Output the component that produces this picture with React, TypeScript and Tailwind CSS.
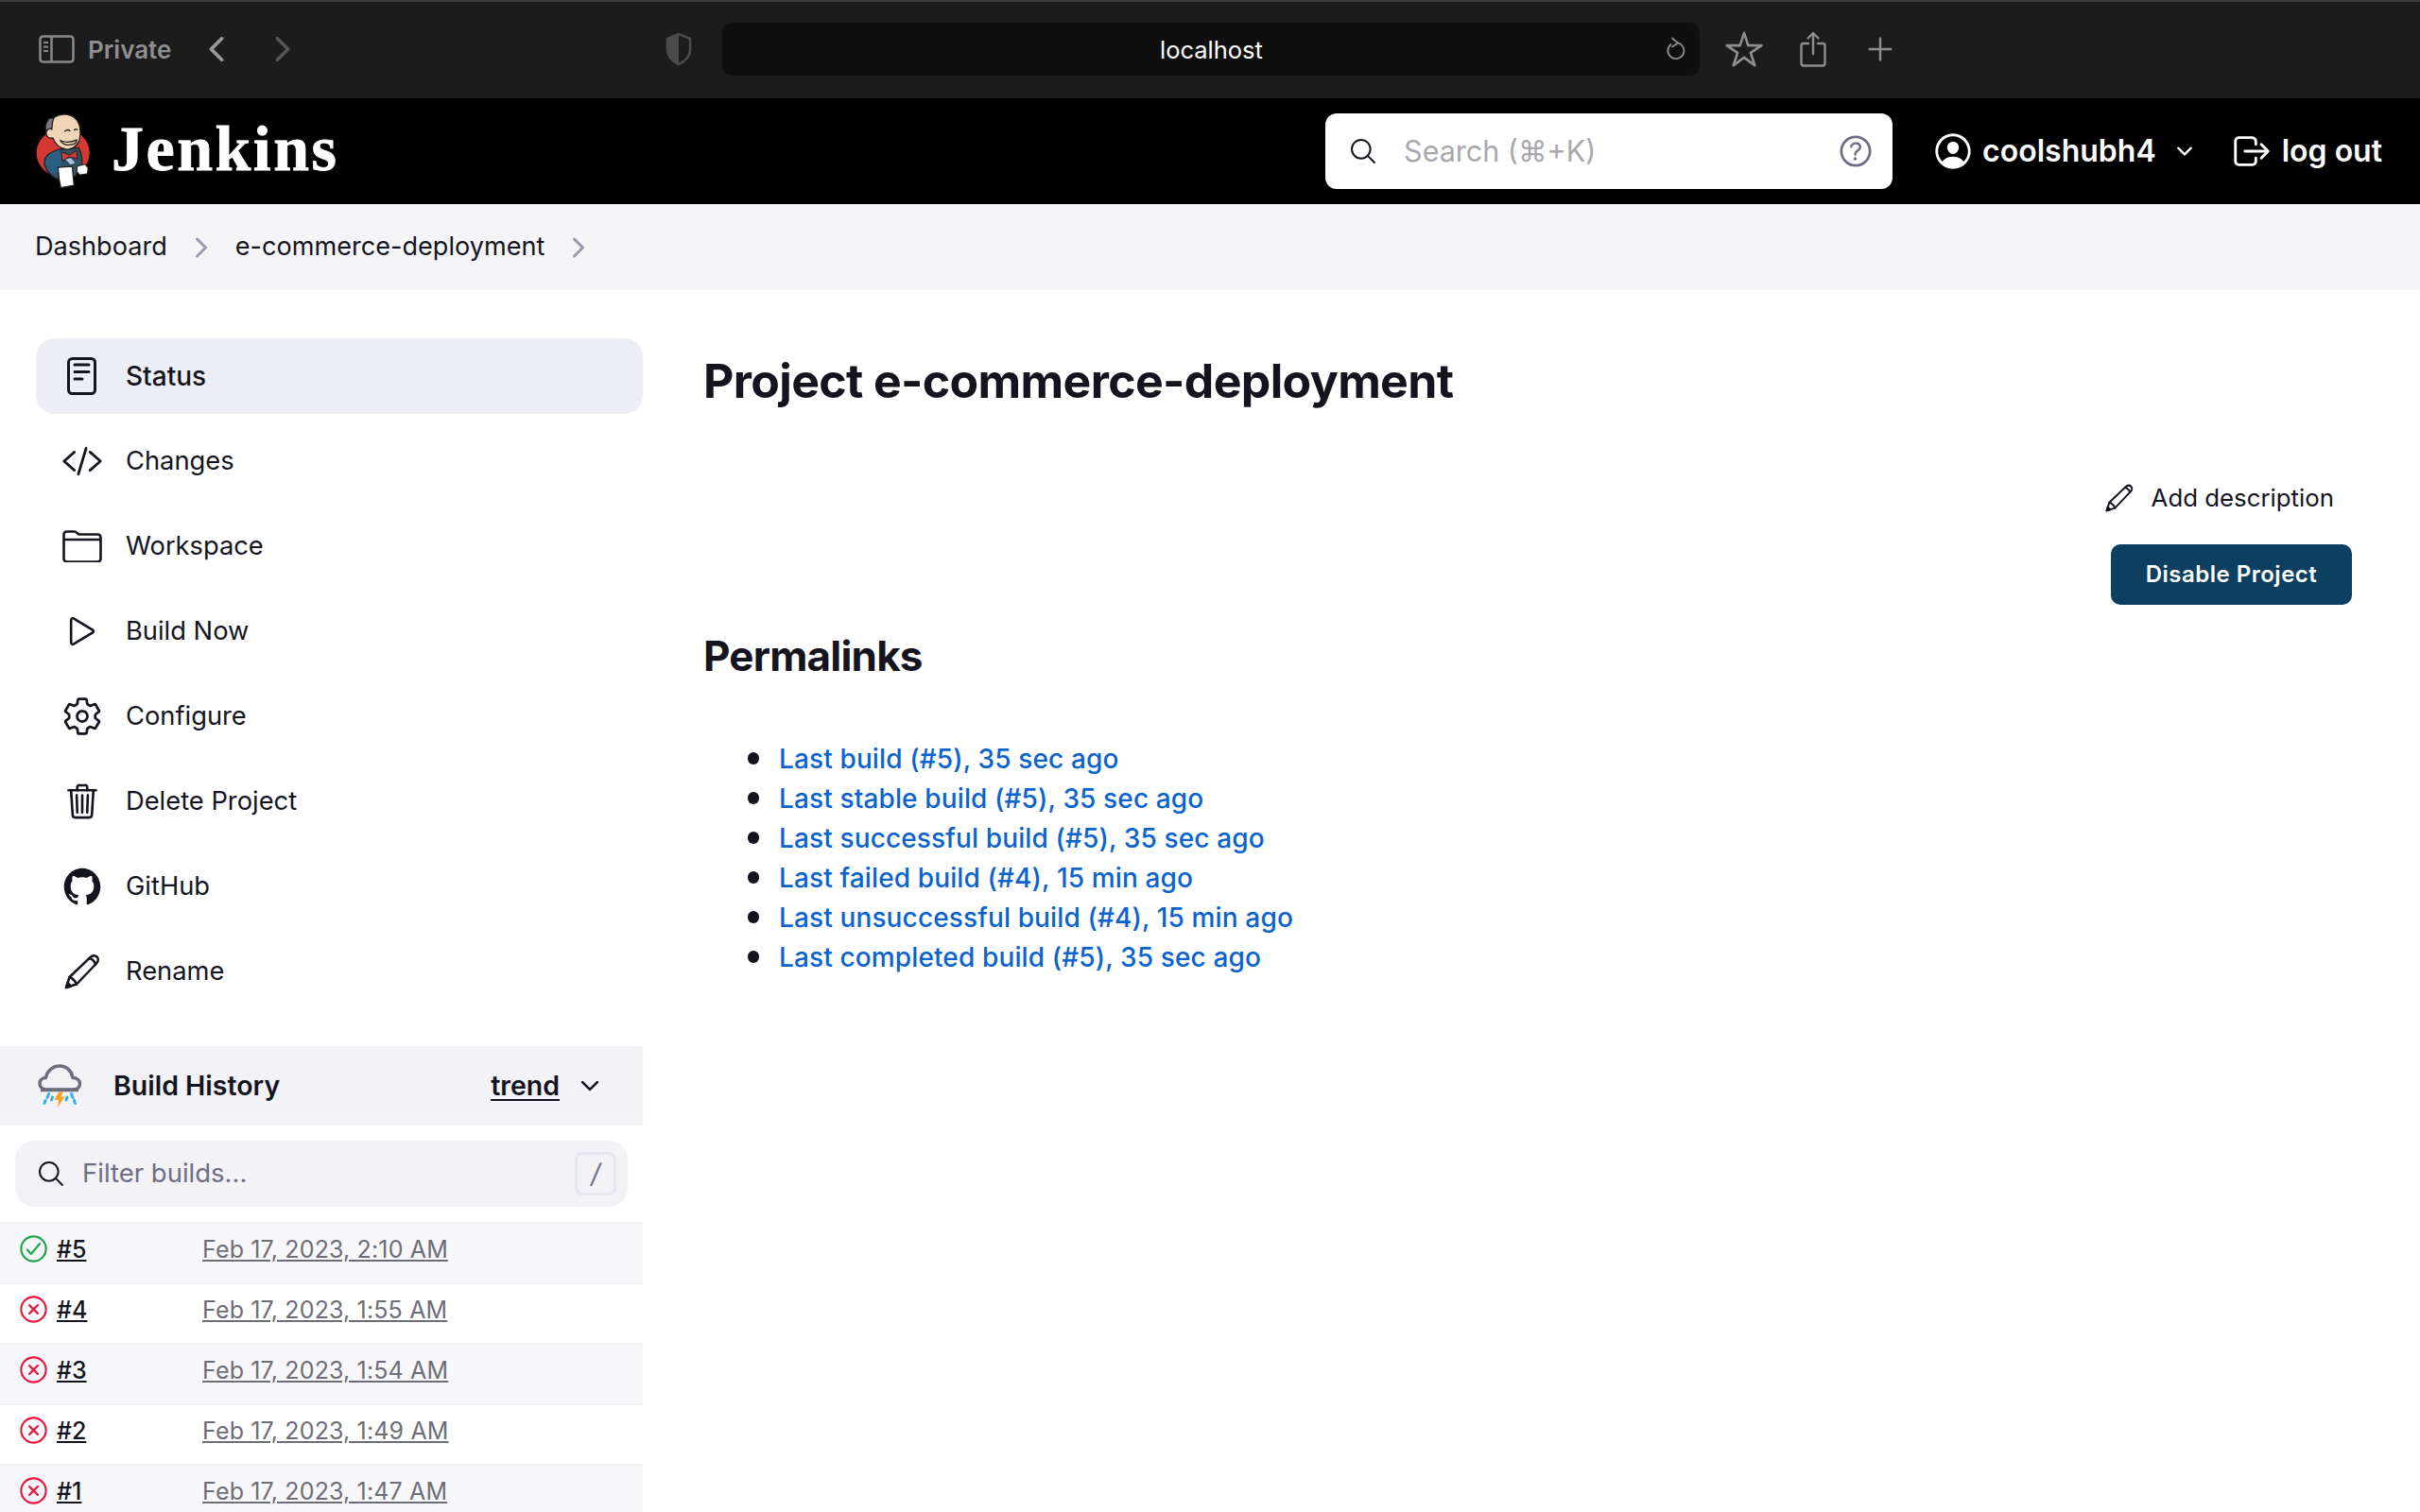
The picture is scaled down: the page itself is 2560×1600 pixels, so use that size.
import {
  IoAdd,
  IoChevronBack,
  IoChevronDownOutline,
  IoChevronForward,
  IoCheckmarkCircleOutline,
  IoCloseCircleOutline,
  IoCodeSlashOutline,
  IoHelpCircleOutline,
  IoLogoGithub,
  IoLogOutOutline,
  IoPersonCircleOutline,
  IoPlayOutline,
  IoSearchOutline,
  IoSettingsOutline,
  IoStarOutline,
  IoTrashOutline,
} from "react-icons/io5"
import type { ReactNode } from "react"

const StatusIcon = () => (
  <svg viewBox="0 0 31 40" className="w-[31px] h-[40px]" fill="none" stroke="currentColor" strokeLinecap="round">
    <rect x="1.500" y="1.500" width="28" height="37" rx="4" strokeWidth="3" />
    <path d="M8 8h15M8 15.500h15M8 23h8" strokeWidth="3" />
  </svg>
)

const FolderIcon = () => (
  <svg viewBox="0 0 42 34" className="w-[42px] h-[34px]" fill="none" stroke="currentColor" strokeWidth="2.600" strokeLinejoin="round">
    <path d="M1.500 9V5C1.500 2.800 2.800 1.500 5 1.500h8c2 0 3 3 5 3h19c2.200 0 3.500 1.200 3.500 3.500v22c0 2.200-1.300 3.500-3.500 3.500H5c-2.200 0-3.500-1.300-3.500-3.500z" />
    <path d="M1.500 10h39" />
  </svg>
)

const PencilIcon = ({ className }: { className: string }) => (
  <svg viewBox="0 0 38 38" className={className} fill="none" stroke="currentColor" strokeWidth="2.500" strokeLinecap="round" strokeLinejoin="round">
    <path d="M2 36l3.500-11L27 4.500c2.500-2.500 5.500-3 7.500-1s1.500 5-1 7.500L13 32.500z" />
    <path d="M26.500 5c3 .5 6 3.500 6.500 6.500M5.500 25c3 1 6.500 4.500 7.500 7.500" />
    <path d="M2 36l1.500-5 3.500 3.500z" fill="currentColor" />
  </svg>
)

const StormIcon = () => (
  <svg viewBox="0 0 46 46" className="w-[46px] h-[46px]" fill="none">
    <path d="M10 27c-4.500 0-8-2.500-8-6.500 0-3.500 3-6 6.500-6C9.500 8 15.500 2 23 2s13 5.500 14 12.500c4 0 7.500 2.500 7.500 6.500s-3.500 6-7.500 6z" fill="#f2f2f7" stroke="#6d6d80" strokeWidth="3.500" strokeLinejoin="round" />
    <path d="M3 27.500h40" stroke="#6d6d80" strokeWidth="3.500" />
    <path d="M22 29.500l-4.500 8.500h4.500l-1 8 7.500-11.500h-4l2.500-5z" fill="#f6a623" />
    <path d="M11.500 31.500l-1.500 4M8 38.500l-1 3M35.500 31.500l1.500 4M38.500 38.500l1 3M15.500 35l-1 3M31 35l-1 3" stroke="#35b0ea" strokeWidth="3" strokeLinecap="round" />
  </svg>
)

const JenkinsLogo = () => (
  <svg viewBox="55 45 172 242" className="w-[58px] h-[80px]">
    <ellipse cx="140" cy="172" rx="85" ry="78" fill="#d33833" />
    <path d="M80 205c0-20 10-35 50-45l60-5c8 15 12 35 10 55l-20 35-60 10c-20-10-35-25-40-50z" fill="#335061" stroke="#231f20" strokeWidth="4" />
    <path d="M84 200c2-18 16-32 46-38l10 6-8 58-24 14c-14-10-22-22-24-40z" fill="#2a5f85" />
    <path d="M95 62c-12 15-14 30-8 46 4 6 10 6 14 4l12-52c-6 0-12 0-18 2z" fill="#7d7c7a" stroke="#231f20" strokeWidth="4" />
    <path d="M112 58c20-14 50-14 68 4 14 14 20 42 12 70-6 18-26 30-42 28-20-4-36-18-42-36-12 2-22-4-22-16 0-10 10-18 18-12 2-14 0-26 8-38z" fill="#f0d6b7" stroke="#231f20" strokeWidth="4" />
    <path d="M146 102c6-5 12-5 16-1M176 98c3-3 7-3 10-1M132 132c14 6 34 6 52-2 0 10-10 16-26 16-12 0-22-6-26-14z" fill="none" stroke="#231f20" strokeWidth="4" strokeLinecap="round" />
    <path d="M134 168l26 10 24-14 2 26-26-6-22 14z" fill="#d33833" stroke="#231f20" strokeWidth="3" />
    <path d="M148 192l18-4 12 16-14 4z" fill="#a5c8df" />
    <path d="M124 218l46-3 5 60-42 8-6-30z" fill="#fff" stroke="#231f20" strokeWidth="4" />
    <path d="M186 214l24-6 10 12-2 18-24 4-10-12z" fill="#fff" stroke="#231f20" strokeWidth="3" />
  </svg>
)

const SidebarToggle = () => (
  <svg viewBox="0 0 38 30" className="w-[38px] h-[30px]" fill="none" stroke="#8a8a8a" strokeWidth="2.500">
    <rect x="1.500" y="1.500" width="35" height="27" rx="3" />
    <path d="M13.500 1.500v27" />
    <path d="M5 8h5M5 12.500h5M5 17h5" strokeWidth="2" />
  </svg>
)

const Shield = () => (
  <svg viewBox="0 0 28 34" className="w-[28px] h-[34px]">
    <path d="M14 1l12 5v12c0 7-6 12-12 15C8 30 2 25 2 18V6z" fill="none" stroke="#4b4b4b" strokeWidth="2.500" />
    <path d="M14 1L2 6v12c0 7 6 12 12 15z" fill="#4b4b4b" />
  </svg>
)

const ReloadIcon = () => (
  <svg viewBox="0 0 22 26" className="w-[22px] h-[26px]" fill="none" stroke="#8e8e8e" strokeWidth="1.800" strokeLinecap="round" strokeLinejoin="round">
    <path d="M14.500 6.500a8.500 8.500 0 1 1-8 1.500" />
    <path d="M8 1.500l6 5-6 4" />
  </svg>
)

const ShareIcon = () => (
  <svg viewBox="0 0 28 38" className="w-[28px] h-[38px]" fill="none" stroke="#8e8e8e" strokeWidth="2.400" strokeLinecap="round" strokeLinejoin="round">
    <path d="M9 13H3.500A2 2 0 0 0 1.500 15v19a2.500 2.500 0 0 0 2.500 2.500h20a2.500 2.500 0 0 0 2.500-2.500V15a2 2 0 0 0-2-2H19" />
    <path d="M14 24V2M8.500 7.500L14 2l5.500 5.500" />
  </svg>
)

interface ITask {
  label: string
  icon: ReactNode
  active?: boolean
}

const tasks: ITask[] = [
  { label: "Status", icon: <StatusIcon />, active: true },
  { label: "Changes", icon: <IoCodeSlashOutline size={44} /> },
  { label: "Workspace", icon: <FolderIcon /> },
  { label: "Build Now", icon: <IoPlayOutline size={42} /> },
  { label: "Configure", icon: <IoSettingsOutline size={44} /> },
  { label: "Delete Project", icon: <IoTrashOutline size={42} /> },
  { label: "GitHub", icon: <IoLogoGithub size={44} /> },
  { label: "Rename", icon: <PencilIcon className="w-[38px] h-[38px]" /> },
]

const builds = [
  { id: "#5", date: "Feb 17, 2023, 2:10 AM", ok: true },
  { id: "#4", date: "Feb 17, 2023, 1:55 AM", ok: false },
  { id: "#3", date: "Feb 17, 2023, 1:54 AM", ok: false },
  { id: "#2", date: "Feb 17, 2023, 1:49 AM", ok: false },
  { id: "#1", date: "Feb 17, 2023, 1:47 AM", ok: false },
]

const permalinks = [
  "Last build (#5), 35 sec ago",
  "Last stable build (#5), 35 sec ago",
  "Last successful build (#5), 35 sec ago",
  "Last failed build (#4), 15 min ago",
  "Last unsuccessful build (#4), 15 min ago",
  "Last completed build (#5), 35 sec ago",
]

const BrowserBar = () => (
  <div className="h-[104px] shrink-0 bg-[#1c1c1c] border-t-2 border-[#3c3c3c] flex items-center pl-[41px] pb-[2px]">
    <SidebarToggle />
    <span className="ml-[14px] text-[26px] font-semibold text-[#8f8f8f]">Private</span>
    <IoChevronBack size={40} className="ml-[28px] text-[#9a9a9a]" />
    <IoChevronForward size={40} className="ml-[30px] text-[#555555]" />
    <div className="ml-[385px]"><Shield /></div>
    <div className="ml-[32px] w-[1034px] h-[56px] rounded-[10px] bg-[#0f0f0f] flex items-center justify-center relative pt-[2px]">
      <span className="text-[25.500px] text-white">localhost</span>
      <div className="absolute right-[15px] top-[15px]"><ReloadIcon /></div>
    </div>
    <IoStarOutline size={42} className="ml-[26px] text-[#8e8e8e]" />
    <div className="ml-[38px]"><ShareIcon /></div>
    <IoAdd size={40} className="ml-[37px] text-[#8e8e8e]" />
  </div>
)

const Header = () => (
  <div className="h-[112px] shrink-0 bg-black flex items-center pl-[38px] pr-[40px] text-white">
    <JenkinsLogo />
    <span className="ml-[22px] mb-[6px] text-[68px] font-bold leading-none tracking-[2.500px] [-webkit-text-stroke:0.8px_white] font-['Liberation_Serif',serif]">Jenkins</span>
    <div className="ml-auto w-[600px] h-[80px] bg-white rounded-[12px] flex items-center pl-[24px] pr-[17px]">
      <IoSearchOutline size={32} className="text-[#14141f]" />
      <span className="ml-[27px] flex-1 text-[30.500px] text-[#a8a8ad]">Search (⌘+K)</span>
      <IoHelpCircleOutline size={44} className="text-[#6d6d85]" />
    </div>
    <IoPersonCircleOutline size={46} className="ml-[41px]" />
    <span className="ml-[8px] text-[32px] font-semibold">coolshubh4</span>
    <IoChevronDownOutline size={24} className="ml-[18px]" />
    <IoLogOutOutline size={46} className="ml-[36px]" />
    <span className="ml-[9px] text-[32px] font-semibold">log out</span>
  </div>
)

const Breadcrumb = () => (
  <div className="h-[91px] shrink-0 bg-[#f5f5f8] flex items-center pl-[37px] text-[27.100px] text-[#14141f]">
    <span>Dashboard</span>
    <IoChevronForward size={32} className="ml-[20px] text-[#9a9aae]" />
    <span className="ml-[20px]">e-commerce-deployment</span>
    <IoChevronForward size={32} className="ml-[20px] text-[#9a9aae]" />
  </div>
)

const Sidebar = () => (
  <div className="w-[680px] shrink-0 pt-[51px]">
    <div className="pl-[38px] flex flex-col gap-[10px]">
      {tasks.map((task) => (
        <div key={task.label} className={`h-[80px] rounded-[20px] flex items-center text-[#14141f] ${task.active ? "bg-[#edeef3] font-medium text-[28px]" : "text-[27.300px]"}`}>
          <div className="w-[95px] pl-[2px] flex justify-center shrink-0">{task.icon}</div>
          <span>{task.label}</span>
        </div>
      ))}
    </div>
    <div className="mt-[39px] h-[84px] bg-[#f2f2f7] flex items-center pl-[40px] pr-[42px]">
      <StormIcon />
      <span className="ml-[34px] flex-1 text-[28.500px] font-semibold text-[#14141f]">Build History</span>
      <span className="text-[28.500px] font-semibold text-[#14141f] underline underline-offset-4">trend</span>
      <IoChevronDownOutline size={28} className="ml-[18px] text-[#14141f]" />
    </div>
    <div className="mt-[16px] mx-[16px] h-[70px] rounded-[20px] bg-[#f2f2f7] flex items-center pl-[22px] pr-[12px]">
      <IoSearchOutline size={32} className="text-[#14141f]" />
      <span className="ml-[17px] flex-1 text-[27.500px] text-[#6d6d85]">Filter builds...</span>
      <div className="w-[44px] h-[46px] rounded-[8px] border-[3px] border-[#e6e6ef] flex items-center justify-center text-[28px] italic text-[#6d6d85]">/</div>
    </div>
    <div className="mt-[16px]">
      {builds.map((build, index) => (
        <div key={build.id} className={`h-[64px] shrink-0 flex items-start border-t-2 border-[#f2f2f5] pt-[9px] ${index % 2 === 0 ? "bg-[#f8f8fa]" : "bg-white"}`}>
          {build.ok
            ? <IoCheckmarkCircleOutline size={35} className="ml-[18px] shrink-0 text-[#1ea64b]" />
            : <IoCloseCircleOutline size={35} className="ml-[18px] shrink-0 text-[#e6193c]" />}
          <span className="ml-[7px] w-[154px] text-[25px] font-medium text-[#14141f] underline underline-offset-2">{build.id}</span>
          <span className="text-[25px] tracking-[0.150px] text-[#6d6d78] underline underline-offset-2">{build.date}</span>
        </div>
      ))}
    </div>
  </div>
)

const Main = () => (
  <div className="flex-1 pl-[64px] pr-[72px] pt-[64px] text-[#14141f]">
    <h1 className="text-[50px] font-bold leading-[64px] tracking-[-0.650px]">Project e-commerce-deployment</h1>
    <div className="mt-[73px] flex flex-col items-end">
      <div className="flex items-center pr-[19px]">
        <PencilIcon className="w-[30px] h-[30px]" />
        <span className="ml-[19px] text-[25.800px]">Add description</span>
      </div>
      <div className="mt-[29px] w-[255px] h-[64px] rounded-[10px] bg-[#0d3f60] text-white flex items-center justify-center text-[24px] font-semibold tracking-[0.5px]">Disable Project</div>
    </div>
    <h2 className="mt-[31px] text-[44px] font-bold leading-[46px] tracking-[-0.800px]">Permalinks</h2>
    <ul className="mt-[65px] pl-[47px] text-[28px] leading-[42px]">
      {permalinks.map((link) => (
        <li key={link} className="flex items-center">
          <span className="w-[12px] h-[13px] rounded-full bg-[#14141f] shrink-0" />
          <span className="ml-[21px] text-[#0b63ce] font-medium tracking-[0.130px]">{link}</span>
        </li>
      ))}
    </ul>
  </div>
)

const App = () => {
  return (
    <div className="w-[2560px] h-[1600px] overflow-hidden bg-white flex flex-col font-['Inter',sans-serif]">
      <BrowserBar />
      <Header />
      <Breadcrumb />
      <div className="flex flex-1 min-h-0">
        <Sidebar />
        <Main />
      </div>
    </div>
  )
}

export default App
